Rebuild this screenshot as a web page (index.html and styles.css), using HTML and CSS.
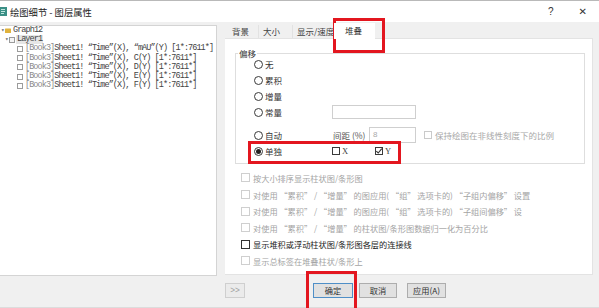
FILE: index.html
```html
<!DOCTYPE html>
<html>
<head>
<meta charset="utf-8">
<link rel="stylesheet" href="styles.css">
</head>
<body>
<div class="window">
  <div class="titlebar">
    <svg class="appicon" width="7" height="9" viewBox="0 0 7 9"><rect x="0" y="0" width="7" height="9" fill="#3a8f86"/><rect x="1" y="2" width="4" height="1" fill="#bfe6de"/><rect x="1" y="4" width="4" height="1" fill="#bfe6de"/><rect x="1" y="6" width="3" height="1" fill="#bfe6de"/></svg>
    <span class="title">绘图细节 - 图层属性</span>
    <span class="spacer"></span>
    <span class="help">?</span>
    <span class="close">✕</span>
  </div>
  <div class="main">
    <div class="tree">
      <div class="node n0"><span class="arrow">▾</span><svg class="folder" width="6" height="5" viewBox="0 0 6 5"><rect x="0" y="0.5" width="6" height="4.5" rx="0.5" fill="#e0b23c"/></svg><span class="nlabel">Graph12</span></div>
      <div class="node n1"><span class="arrow">▾</span><span class="layericon"></span><span class="nlabel sel">Layer1</span></div>
      <div class="node n2"><span class="ticon"></span><span class="nlabel"><span class="dim">[Book3]</span>Sheet1! “Time”(X), “mAU”(Y) [1*:7611*]</span></div>
      <div class="node n2"><span class="ticon"></span><span class="nlabel"><span class="dim">[Book3]</span>Sheet1! “Time”(X), C(Y) [1*:7611*]</span></div>
      <div class="node n2"><span class="ticon"></span><span class="nlabel"><span class="dim">[Book3]</span>Sheet1! “Time”(X), D(Y) [1*:7611*]</span></div>
      <div class="node n2"><span class="ticon"></span><span class="nlabel"><span class="dim">[Book3]</span>Sheet1! “Time”(X), E(Y) [1*:7611*]</span></div>
      <div class="node n2"><span class="ticon"></span><span class="nlabel"><span class="dim">[Book3]</span>Sheet1! “Time”(X), F(Y) [1*:7611*]</span></div>
    </div>
    <div class="right">
      <div class="tabs">
        <div class="tab t1">背景</div>
        <div class="tab t2">大小</div>
        <div class="tab t3">显示/速度</div>
        <div class="tab active">堆叠</div>
      </div>
      <div class="panel">
        <fieldset class="group">
          <legend>偏移</legend>
          <div class="row first"><span class="radio"></span><span class="rlabel">无</span></div>
          <div class="row"><span class="radio"></span><span class="rlabel">累积</span></div>
          <div class="row"><span class="radio"></span><span class="rlabel">增量</span></div>
          <div class="row"><span class="radio"></span><span class="rlabel">常量</span><span class="input wide"></span></div>
          <div class="row auto"><span class="radio"></span><span class="rlabel">自动</span><span class="gaplabel">间距 (%)</span><span class="input small">8</span><span class="cbox dis keep"></span><span class="keeplabel">保持绘图在非线性刻度下的比例</span></div>
          <div class="row"><span class="radio on"></span><span class="rlabel">单独</span><span class="axis"><span class="cbox"></span><span class="axlabel">X</span></span><span class="axis"><span class="cbox checked"><svg width="8" height="8" viewBox="0 0 8 8"><path d="M1.3 4.2 L3.2 6 L6.8 1.6" fill="none" stroke="#333" stroke-width="1.1"/></svg></span><span class="axlabel">Y</span></span></div>
        </fieldset>
        <div class="checks">
          <div class="crow dis"><span class="cbox"></span><span class="clabel">按大小排序显示柱状图/条形图</span></div>
          <div class="crow dis"><span class="cbox"></span><span class="clabel">对使用 “累积” / “增量” 的图应用( “组” 选项卡的) “子组内偏移” 设置</span></div>
          <div class="crow dis"><span class="cbox"></span><span class="clabel">对使用 “累积” / “增量” 的图应用( “组” 选项卡的) “子组间偏移” 设</span></div>
          <div class="crow dis"><span class="cbox"></span><span class="clabel">对使用 “累积” / “增量” 的柱状图/条形图数据归一化为百分比</span></div>
          <div class="crow"><span class="cbox"></span><span class="clabel">显示堆积或浮动柱状图/条形图各层的连接线</span></div>
          <div class="crow dis"><span class="cbox"></span><span class="clabel">显示总标签在堆叠柱状/条形上</span></div>
        </div>
      </div>
    </div>
  </div>
  <div class="footer">
    <button class="btn more">&gt;&gt;</button>
    <button class="btn ok">确定</button>
    <button class="btn cancel">取消</button>
    <button class="btn apply">应用(A)</button>
  </div>
  <div class="mark m1"></div>
  <div class="mark m2"></div>
  <div class="mark m3"></div>
</div>
</body>
</html>
```

FILE: styles.css
```css
* { box-sizing: border-box; }
html, body { margin: 0; padding: 0; }
body {
  width: 599px;
  height: 308px;
  overflow: hidden;
  background: #f0f0f0;
  font-family: "Noto Sans CJK SC", "Liberation Sans", sans-serif;
  font-size: 8.5px;
  color: #333;
}
.window { position: relative; width: 599px; height: 308px; }

.titlebar {
  height: 22px;
  background: #fff;
  border-top: 1px solid #b9b9b9;
  display: flex;
  align-items: center;
}
.appicon { display: block; margin-left: 0; margin-right: 3px; }
.title { font-size: 9.3px; color: #222; line-height: 12px; }
.spacer { flex: 1; }
.help { font-size: 10px; color: #333; margin-right: 25px; font-family: "Liberation Sans", sans-serif; }
.close { font-size: 10px; color: #333; margin-right: 12px; font-family: "DejaVu Sans", sans-serif; }

.main { display: flex; padding-top: 1px; }

.tree {
  width: 217px;
  height: 251px;
  margin-top: 2px;
  background: #fff;
  border: 1px solid #d4d4d4;
  border-left: none;
  overflow: hidden;
  font-family: "Liberation Mono", "Noto Sans CJK SC", monospace;
  font-size: 8.5px;
  letter-spacing: -0.92px;
  color: #444;
}
.node {
  height: 9.2px;
  line-height: 9.2px;
  display: flex;
  align-items: center;
  white-space: nowrap;
}
.node > * { flex: none; }
.arrow { font-size: 6px; color: #666; width: 3px; letter-spacing: 0; }
.n0 { padding-left: 1px; }
.n0 .folder { margin-left: 1px; margin-right: 2px; }
.n1 { padding-left: 5px; }
.layericon {
  width: 6px; height: 6px;
  border: 1px solid #9a9a9a;
  background: #f4f4f4;
  margin-left: 1px;
  margin-right: 1px;
}
.sel { background: #e6e6e6; padding: 0 1px; }
.n2 { padding-left: 17px; }
.ticon {
  width: 6px; height: 6px;
  border: 1px solid #9c9c9c;
  margin-right: 2px;
}
.dim { color: #8a8a8a; }

.right { margin-left: 8px; width: 368px; }
.tabs { height: 15px; display: flex; align-items: flex-end; }
.tab {
  height: 13px;
  line-height: 13px;
  color: #444;
  white-space: nowrap;
  overflow: hidden;
  border-right: 1px solid #e2e2e2;
}
.t1 { width: 34px; padding-left: 7px; }
.t2 { width: 34px; padding-left: 4px; }
.t3 { width: 41px; padding-left: 4px; border-right: none; }
.tab.active {
  height: 16px;
  line-height: 15px;
  width: 41px;
  margin-bottom: -1px;
  padding-left: 11px;
  background: #fff;
  border: none;
  position: relative;
  z-index: 1;
  color: #333;
}

.panel {
  height: 237px;
  background: #fff;
  border: 1px solid #e3e3e3;
  border-left: none;
}

.group {
  margin: 9px 7px 0 10px;
  padding: 0 0 4px 18px;
  border: 1px solid #dedede;
  min-width: 0;
}
.group legend {
  margin-left: -16px;
  padding: 0 1px;
  line-height: 10px;
  font-size: 8.5px;
  color: #333;
}
.row { height: 16px; display: flex; align-items: center; }
.row > * { flex: none; }
.row.first { margin-top: -2px; }
.row.auto { margin-top: 7px; }
.radio {
  width: 9px; height: 9px;
  border: 1px solid #3a3a3a;
  border-radius: 50%;
  background: #fff;
  display: flex;
  align-items: center;
  justify-content: center;
}
.radio.on::after {
  content: "";
  width: 5px; height: 5px;
  border-radius: 50%;
  background: #222;
}
.rlabel { width: 67px; margin-left: 2px; color: #333; }
.input {
  height: 14px;
  border: 1px solid #cfcfcf;
  background: #fff;
  font-family: "Liberation Sans", sans-serif;
  font-size: 8px;
  color: #aaa;
  line-height: 12px;
  padding-left: 3px;
}
.input.wide { width: 84px; }
.input.small { width: 47px; height: 16px; line-height: 14px; }
.gaplabel { width: 36px; margin-left: 1px; color: #555; }
.cbox {
  width: 8px; height: 8px;
  border: 1px solid #3a3a3a;
  background: #fff;
  flex: none;
  display: flex;
}
.cbox svg { display: block; margin: -1px; }
.cbox.dis { border-color: #cacaca; }
.keep { margin-left: 8px; }
.keeplabel { margin-left: 3px; color: #a8a8a8; }
.axis { width: 43px; display: flex; align-items: center; }
.axlabel { margin-left: 2px; font-family: "Liberation Serif", serif; font-size: 8.5px; color: #444; }

.checks { margin-top: 5.7px; padding-left: 16px; }
.crow { height: 16.6px; display: flex; align-items: center; white-space: nowrap; }
.crow .cbox { width: 9px; height: 9px; border-color: #333; border-width: 1.3px; }
.crow.dis .cbox { border-color: #cfcfcf; border-width: 1px; }
.clabel { margin-left: 3px; color: #222; font-size: 8.2px; }
.crow.dis .clabel { color: #a4a4a4; }

.footer {
  display: flex;
  padding-top: 7px;
  padding-left: 225px;
  height: 32px;
  border-bottom: 1px solid #dcdcdc;
}
.btn {
  height: 15px;
  margin: 0;
  padding: 0;
  background: #e1e1e1;
  border: 1px solid #adadad;
  font-family: "Noto Sans CJK SC", sans-serif;
  font-size: 8.2px;
  color: #333;
  line-height: 13px;
}
.more { width: 20px; background: #ebebeb; border-color: #cfcfcf; color: #a0a0a0; font-family: "Liberation Sans", sans-serif; }
.ok { width: 40px; margin-left: 68px; border-color: #4f8fc7; }
.cancel { width: 38px; margin-left: 6px; }
.apply { width: 39px; margin-left: 10px; }

.mark {
  position: absolute;
  border: 3px solid #e3161f;
}
.m1 { left: 333px; top: 18px; width: 52px; height: 35px; }
.m2 { left: 248px; top: 141px; width: 153px; height: 23px; }
.m3 { left: 306px; top: 271px; width: 51px; height: 45px; }
```
